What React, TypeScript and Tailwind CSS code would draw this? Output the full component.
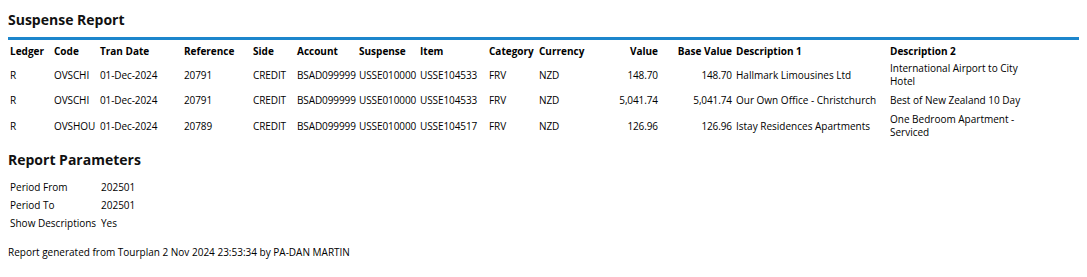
const cols = [
  { key: "ledger", label: "Ledger", w: "w-[44px]" },
  { key: "code", label: "Code", w: "w-[46px]" },
  { key: "date", label: "Tran Date", w: "w-[84px]" },
  { key: "ref", label: "Reference", w: "w-[69px]" },
  { key: "side", label: "Side", w: "w-[44px]" },
  { key: "account", label: "Account", w: "w-[62px]" },
  { key: "suspense", label: "Suspense", w: "w-[61px]" },
  { key: "item", label: "Item", w: "w-[69px]" },
  { key: "category", label: "Category", w: "w-[50px]" },
  { key: "currency", label: "Currency", w: "w-[63px]" },
  { key: "value", label: "Value", w: "w-[60px]", right: true },
  { key: "base", label: "Base Value", w: "w-[74px]", right: true },
  { key: "desc1", label: "Description 1", w: "w-[154px]" },
  { key: "desc2", label: "Description 2", w: "w-[142px]" },
];

type Row = Record<string, string>;

const rows: Row[] = [
  {
    ledger: "R", code: "OVSCHI", date: "01-Dec-2024", ref: "20791", side: "CREDIT",
    account: "BSAD099999", suspense: "USSE010000", item: "USSE104533", category: "FRV",
    currency: "NZD", value: "148.70", base: "148.70", desc1: "Hallmark Limousines Ltd",
    desc2: "International Airport to City Hotel",
  },
  {
    ledger: "R", code: "OVSCHI", date: "01-Dec-2024", ref: "20791", side: "CREDIT",
    account: "BSAD099999", suspense: "USSE010000", item: "USSE104533", category: "FRV",
    currency: "NZD", value: "5,041.74", base: "5,041.74", desc1: "Our Own Office - Christchurch",
    desc2: "Best of New Zealand 10 Day",
  },
  {
    ledger: "R", code: "OVSHOU", date: "01-Dec-2024", ref: "20789", side: "CREDIT",
    account: "BSAD099999", suspense: "USSE010000", item: "USSE104517", category: "FRV",
    currency: "NZD", value: "126.96", base: "126.96", desc1: "Istay Residences Apartments",
    desc2: "One Bedroom Apartment - Serviced",
  },
];

const params = [
  ["Period From", "202501"],
  ["Period To", "202501"],
  ["Show Descriptions", "Yes"],
];

export default function App() {
  return (
    <div className="w-[1087px] h-[277px] bg-white text-black px-2 pt-[10px] text-[10px] font-['Open_Sans',sans-serif]">
      {/* Title */}
      <h1 className="text-[14px] font-bold leading-[20px] text-[#111]">Suspense Report</h1>
      <div className="mt-[7px] h-[3px] bg-[#1d86cc]" />

      {/* Report table */}
      <table className="w-[1022px] table-fixed border-collapse">
        <thead>
          <tr className="h-[22px]">
            {cols.map((c) => (
              <th
                key={c.key}
                className={`${c.w} px-[2px] py-0 font-bold align-middle whitespace-nowrap ${c.right ? "text-right" : "text-left"}`}
              >
                {c.label}
              </th>
            ))}
          </tr>
        </thead>
        <tbody>
          {rows.map((r, i) => (
            <tr key={i} className="h-[25px]">
              {cols.map((c) => (
                <td
                  key={c.key}
                  className={`px-[2px] py-0 leading-[13px] align-middle ${c.key.startsWith("desc") ? "whitespace-normal" : "whitespace-nowrap tracking-[-0.1px]"} ${c.right ? "text-right" : "text-left"}`}
                >
                  {r[c.key]}
                </td>
              ))}
            </tr>
          ))}
        </tbody>
      </table>

      {/* Parameters */}
      <h2 className="mt-[11px] text-[14px] font-bold leading-[20px] text-[#111]">Report Parameters</h2>
      <table className="mt-[8px] border-collapse">
        <tbody>
          {params.map(([k, v]) => (
            <tr key={k} className="h-[18px]">
              <td className="w-[91px] px-[2px] py-0 align-middle whitespace-nowrap">{k}</td>
              <td className="px-[2px] py-0 align-middle">{v}</td>
            </tr>
          ))}
        </tbody>
      </table>

      <p className="mt-[13px] leading-[14px]">Report generated from Tourplan 2 Nov 2024 23:53:34 by PA-DAN MARTIN</p>
    </div>
  );
}
